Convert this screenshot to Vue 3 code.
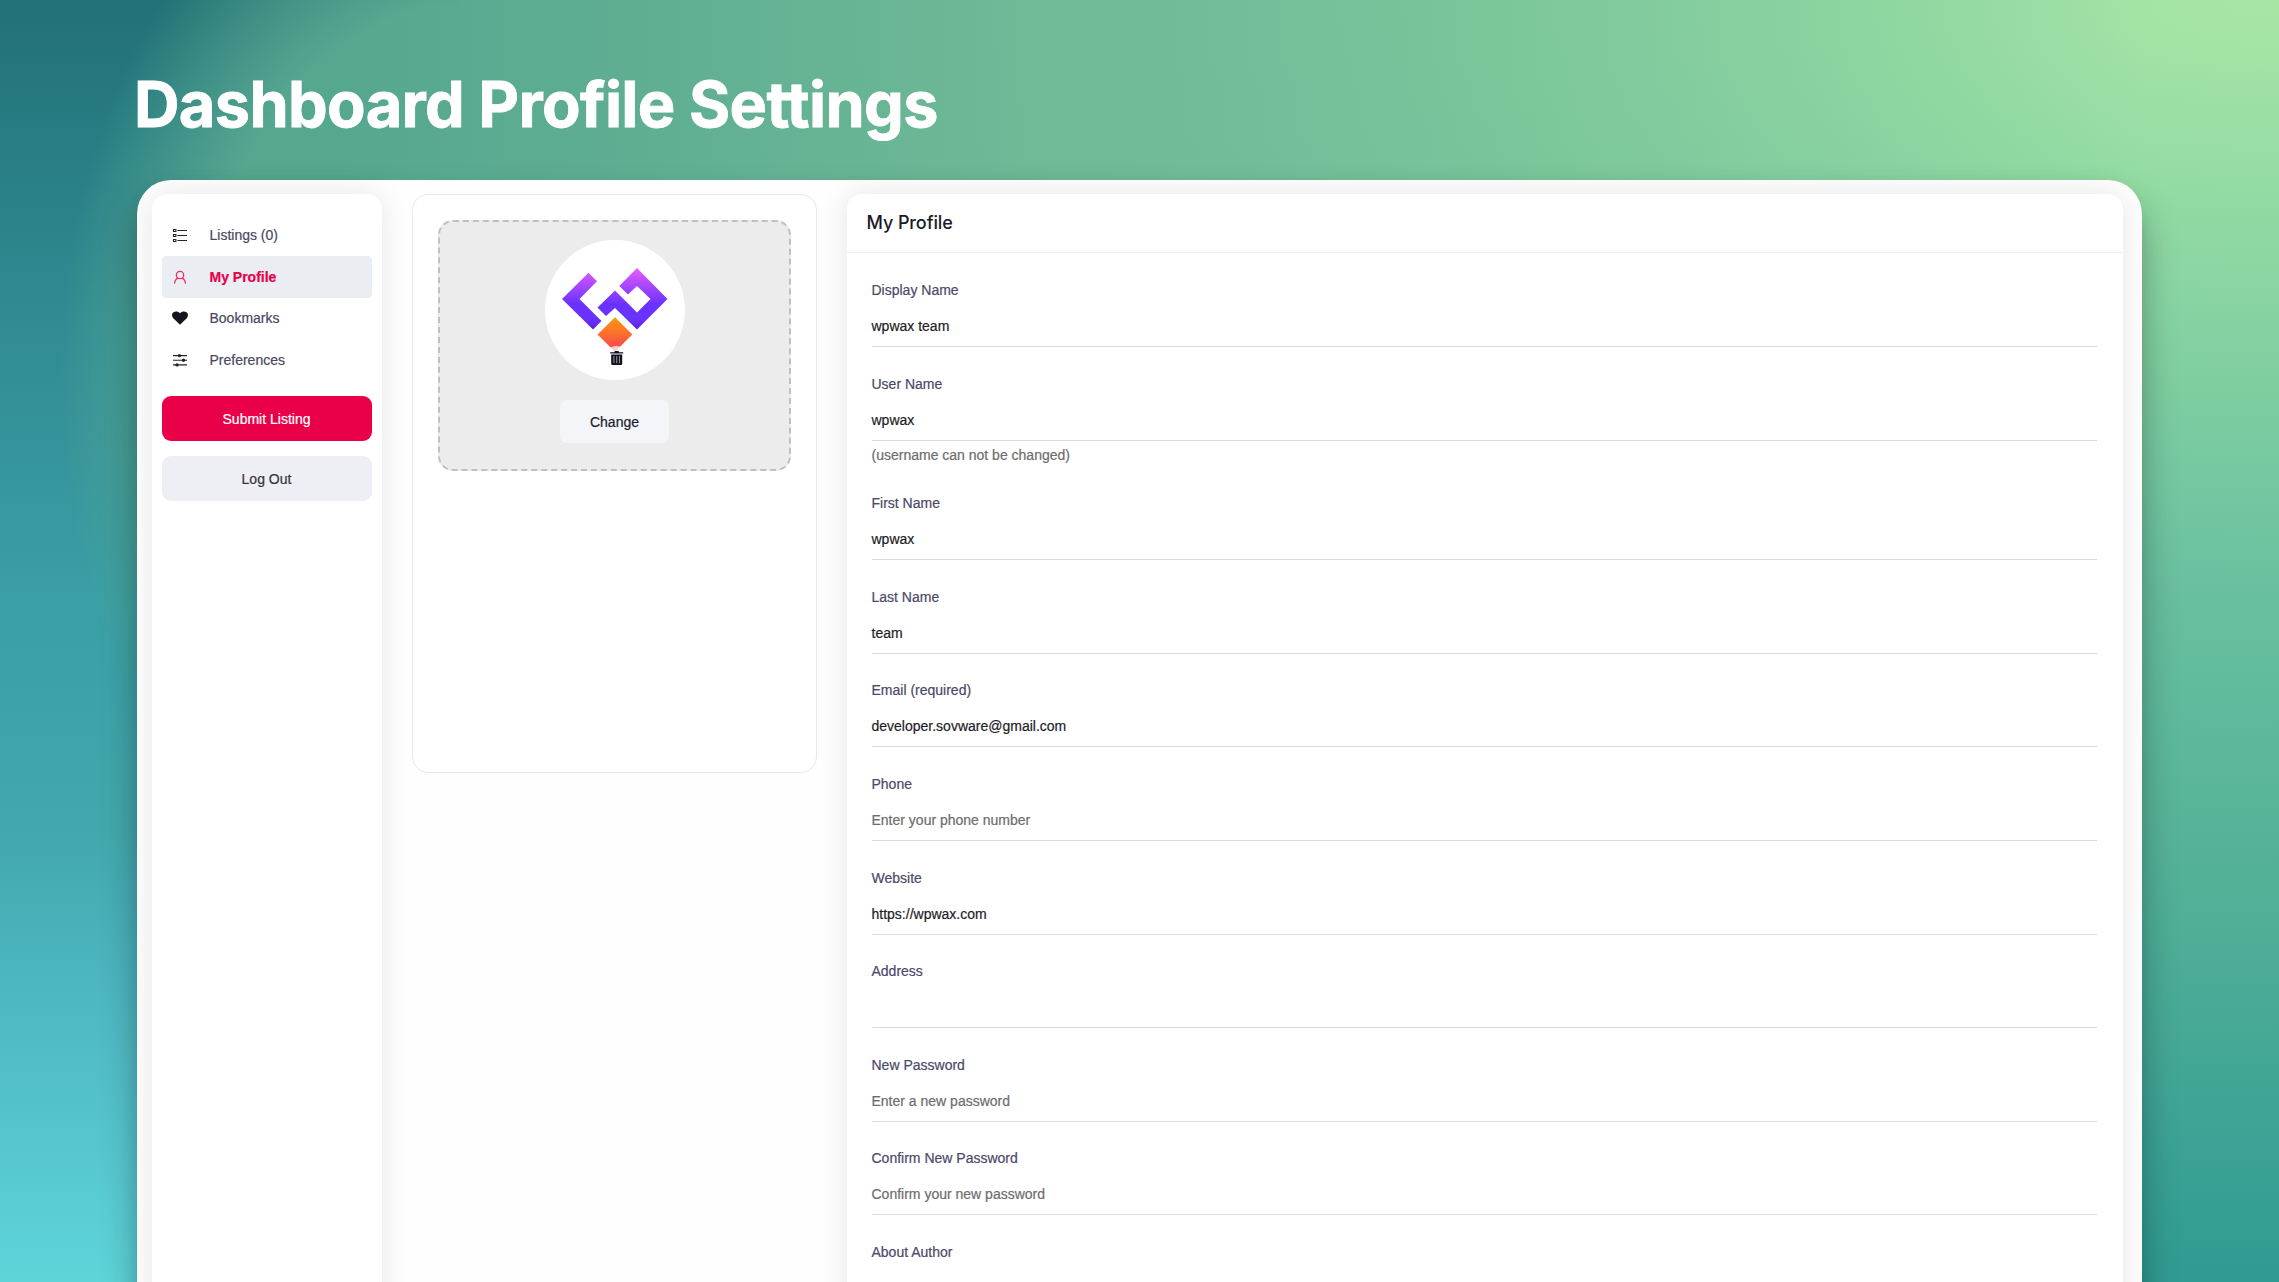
<script setup>
const fields = [
  { label: 'Display Name', value: 'wpwax team' },
  { label: 'User Name', value: 'wpwax', note: '(username can not be changed)' },
  { label: 'First Name', value: 'wpwax' },
  { label: 'Last Name', value: 'team' },
  { label: 'Email (required)', value: 'developer.sovware@gmail.com' },
  { label: 'Phone', placeholder: 'Enter your phone number' },
  { label: 'Website', value: 'https://wpwax.com' },
  { label: 'Address' },
  { label: 'New Password', placeholder: 'Enter a new password' },
  { label: 'Confirm New Password', placeholder: 'Confirm your new password' },
  { label: 'About Author' },
]
</script>

<template>
  <div class="page">
    <div class="shade"></div>
    <h1 class="title">Dashboard Profile Settings</h1>
    <main class="panel">
      <aside class="sidebar">
        <nav class="nav">
          <a class="item">
            <svg class="icon" viewBox="0 0 16 16" fill="none" stroke="#23232b">
              <path d="M5.4 3.5h9.6M5.4 8.5h9.6M5.4 13.500h9.600" stroke-width="1" />
              <path d="M1.500 2.500h2.400v2H1.500zM1.500 7.500h2.400v2H1.500zM1.500 12.500h2.400v2H1.500z" stroke-width="1.1" />
            </svg>
            <span>Listings (0)</span>
          </a>
          <a class="item active">
            <svg class="icon" viewBox="0 0 16 16" fill="none" stroke="#ec2a5c" stroke-width="1.2">
              <circle cx="8" cy="6" r="3.7" />
              <path d="M2.5 14.6c.2-3 1.6-4.8 3.5-5.5M13.5 14.6c-.2-3-1.6-4.8-3.5-5.5" />
            </svg>
            <span>My Profile</span>
          </a>
          <a class="item">
            <svg class="icon" viewBox="0 0 16 16" fill="#15151f">
              <path d="M8 14.8 1.3 8.3C-.5 6.4-.3 3.6 1.5 2.3 3.4.9 6.2 1.3 8 3.2 9.8 1.3 12.6.9 14.5 2.3c1.8 1.3 2 4.1.2 6z" />
            </svg>
            <span>Bookmarks</span>
          </a>
          <a class="item">
            <svg class="icon" viewBox="0 0 16 16" fill="#23232b" stroke="#23232b">
              <path d="M1 3.6h14M1 8.2h14M1 12.9h14" stroke-width="1.1" fill="none" />
              <g stroke="none">
                <circle cx="7.5" cy="3.6" r="1.7" />
                <circle cx="11.5" cy="8.2" r="1.7" />
                <circle cx="5" cy="12.9" r="1.7" />
              </g>
            </svg>
            <span>Preferences</span>
          </a>
        </nav>
        <button class="btn submit">Submit Listing</button>
        <button class="btn logout">Log Out</button>
      </aside>

      <section class="photo-card">
        <div class="dropzone">
          <div class="avatar">
            <svg viewBox="0 0 140 140" width="140" height="140">
              <defs>
                <linearGradient id="violet" gradientUnits="userSpaceOnUse" x1="0" y1="28" x2="0" y2="90">
                  <stop offset="0" stop-color="#e65cff" />
                  <stop offset=".58" stop-color="#6a32ff" />
                  <stop offset=".82" stop-color="#6a32ff" />
                  <stop offset="1" stop-color="#5a1fdc" />
                </linearGradient>
                <linearGradient id="flame" gradientUnits="userSpaceOnUse" x1="0" y1="77" x2="0" y2="112">
                  <stop offset="0" stop-color="#f99b0c" />
                  <stop offset="1" stop-color="#fb3d55" />
                </linearGradient>
              </defs>
              <path fill="url(#violet)" d="M43.5 32.7 52 41.2 34.5 59 56.5 81 48 89.500 17 59z" />
              <path fill="url(#violet)" d="M92 28 122.500 59 92 89.500 70 68 61 76 52.500 67.500 70 50.500 92 72.500 105.500 59 92 46 83 54.500 74.300 46z" />
              <path fill="url(#flame)" d="M70 77.200 87.300 94.500 70 111.700 52.500 94.500z" />
              <circle cx="71.200" cy="117" r="11" fill="#fff" fill-opacity=".72" />
              <g fill="#10101c">
                <path d="M65.200 112.200h4l.8-1.200h3.400l.8 1.200h4v1.400h-13z" />
                <path d="M66.200 114.500h11v9.200q0 1.300-1.300 1.300h-8.400q-1.300 0-1.300-1.300z" />
              </g>
              <path d="M68.900 116v7.300M71.700 116v7.300M74.500 116v7.300" stroke="#8b8b93" stroke-width="1.1" />
            </svg>
          </div>
          <button class="change">Change</button>
        </div>
      </section>

      <section class="profile">
        <header class="profile-head">My Profile</header>
        <div class="form">
          <div v-for="f in fields" :key="f.label" class="field">
            <div class="label">{{ f.label }}</div>
            <div class="control" :class="{ empty: !f.value }">{{ f.value || f.placeholder }}</div>
            <div v-if="f.note" class="note">{{ f.note }}</div>
          </div>
        </div>
      </section>
    </main>
  </div>
</template>

<style>
body {
  margin: 0;
  overflow: hidden;
}
</style>

<style scoped>
.page {
  position: relative;
  box-sizing: border-box;
  width: 2279px;
  height: 1282px;
  overflow: hidden;
  display: flex;
  flex-direction: column;
  padding-left: 137px;
  font-family: "Liberation Sans", Arial, sans-serif;
  font-size: 14px;
  background:
    linear-gradient(90deg, #56a790 15%, rgba(110, 184, 149, 0.88) 46%, rgba(130, 200, 155, 0) 94%),
    radial-gradient(3600px 1300px at 100% 0, #a8e6a6 0, #88d4a2 23%, #68bf9f 46%, #52b097 69%, #309b93 98%);
}
.shade {
  position: absolute;
  left: 0;
  top: 0;
  width: 460px;
  height: 1282px;
  background: linear-gradient(#227176 0, #308a92 24%, #3ba0a6 48%, #43a8ad 65%, #4db6c1 77%, #5ed4d9 100%);
  -webkit-mask-image: radial-gradient(400px 560px at 460px 375px, transparent 66%, rgba(0, 0, 0, 0.45) 82%, #000 100%);
  mask-image: radial-gradient(400px 560px at 460px 375px, transparent 66%, rgba(0, 0, 0, 0.45) 82%, #000 100%);
}
.title {
  position: relative;
  flex: none;
  margin: 0 0 0 -3px;
  padding-top: 64px;
  height: 116px;
  font-family: Inter, sans-serif;
  font-weight: 700;
  font-size: 63px;
  letter-spacing: -0.65px;
  line-height: 80px;
  white-space: nowrap;
  color: #fff;
  -webkit-text-stroke: 0.8px #fff;
}
.panel {
  position: relative;
  flex: none;
  box-sizing: border-box;
  width: 2005px;
  height: 1160px;
  padding: 14px 19.5px 0 14.5px;
  border-radius: 34px 34px 0 0;
  background: #fefefe;
  display: flex;
  align-items: flex-start;
  box-shadow: 0 22px 34px rgba(0, 20, 20, 0.35);
}
.sidebar {
  box-sizing: border-box;
  width: 230px;
  height: 1146px;
  padding: 20px 10px 0;
  border-radius: 15px;
  background: #fff;
  box-shadow: 0 0 28px rgba(0, 0, 0, 0.1);
}
.nav {
  display: flex;
  flex-direction: column;
  margin-bottom: 15px;
}
.item {
  display: flex;
  align-items: center;
  height: 41.8px;
  padding-left: 10.5px;
  border-radius: 4px;
  gap: 21.5px;
  color: #4a4862;
  -webkit-text-stroke: 0.2px;
}
.item.active {
  background: #eaedf2;
  color: #e8004b;
  font-weight: 700;
}
.icon {
  width: 16px;
  height: 16px;
}
.btn {
  display: block;
  width: 100%;
  height: 45px;
  margin: 0 0 15px;
  padding: 0;
  border: 0;
  border-radius: 9px;
  font: inherit;
  -webkit-text-stroke: 0.2px;
}
.submit {
  background: #ea0048;
  color: #fff;
}
.logout {
  background: #eeeff4;
  color: #34343a;
}
.photo-card {
  box-sizing: border-box;
  width: 405px;
  height: 579px;
  margin-left: 30.5px;
  padding: 25px;
  border: 1px solid #e9e9ea;
  border-radius: 16px;
  background: #fff;
}
.dropzone {
  box-sizing: border-box;
  height: 251px;
  padding-top: 18px;
  border: 2px dashed #c0c0c0;
  border-radius: 15px;
  background: #ececec;
  display: flex;
  flex-direction: column;
  align-items: center;
  gap: 20px;
}
.avatar {
  width: 140px;
  height: 140px;
  border-radius: 50%;
  background: #fff;
}
.avatar svg {
  display: block;
}
.change {
  width: 109px;
  height: 43px;
  padding: 0;
  border: 0;
  border-radius: 7px;
  background: #f4f5f9;
  color: #1c1c28;
  font: inherit;
  -webkit-text-stroke: 0.2px;
}
.profile {
  flex: 1;
  height: 1146px;
  margin-left: 29.5px;
  border-radius: 15px;
  background: #fff;
  box-shadow: 0 0 28px rgba(0, 0, 0, 0.1);
}
.profile-head {
  height: 58px;
  padding-left: 20px;
  border-bottom: 1px solid #ebecf1;
  font-family: Inter, sans-serif;
  font-size: 18px;
  font-weight: 500;
  line-height: 57px;
  letter-spacing: -0.1px;
  color: #1b1b27;
}
.form {
  padding: 0.4px 25.5px 0 25px;
}
.field {
  padding-top: 26.6px;
  -webkit-text-stroke: 0.2px;
}
.label {
  height: 20px;
  line-height: 20px;
  color: #4b4968;
}
.control {
  height: 46px;
  line-height: 52px;
  border-bottom: 1px solid #d9d9e3;
  color: #1d1d27;
}
.control.empty {
  color: #6d6d6d;
}
.field:last-child .control {
  border-bottom: 0;
}
.note {
  height: 26px;
  line-height: 29px;
  color: #6d6d6d;
}
</style>
